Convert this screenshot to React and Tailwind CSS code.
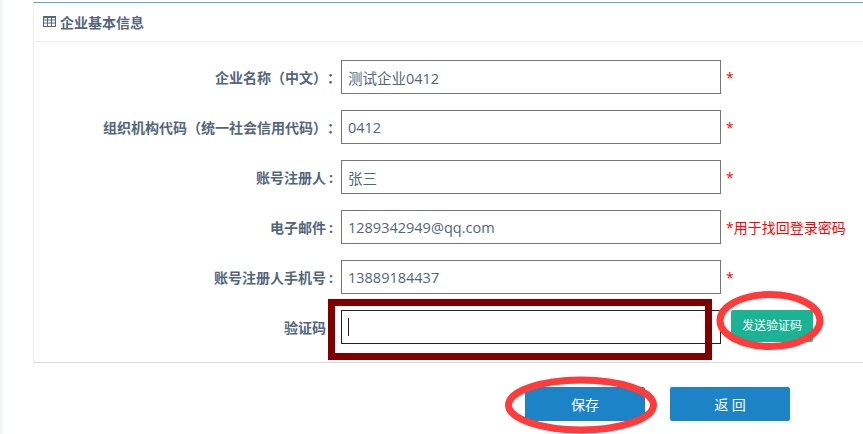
const rows = [
  { label: '企业名称（中文）：', value: '测试企业0412', note: '*' },
  { label: '组织机构代码（统一社会信用代码）：', value: '0412', note: '*' },
  { label: '账号注册人', colon: true, value: '张三', note: '*' },
  { label: '电子邮件', colon: true, value: '1289342949@qq.com', note: '*用于找回登录密码' },
  { label: '账号注册人手机号', colon: true, value: '13889184437', note: '*' },
]

const Row = ({ label, colon, value, note }) => (
  <div className="flex h-[34px] items-center mb-4">
    <label className={`w-[307px] ${colon ? 'pr-[8px]' : 'pr-0'} pt-px text-right text-[14px] font-bold text-[#54667a] whitespace-nowrap [text-spacing-trim:space-all]`}>
      {label}
      {colon && <span className="ml-[3px]">:</span>}
    </label>
    <input
      readOnly
      value={value}
      className="w-[380px] h-[34px] border border-[#767676] bg-white px-[6px] text-[14.5px] text-[#54667a] outline-none"
    />
    <span className="ml-[5px] text-[14px] text-[#ff0000]">{note}</span>
  </div>
)

const App = () => {
  return (
    <div className="relative h-[434px] w-[863px] overflow-hidden bg-white font-['Open_Sans','Noto_Sans_CJK_SC',sans-serif]">
      <div className="flex h-full">
        <div className="w-[3px] shrink-0 bg-[#f4f5f7]" />
        <div className="ml-[30px] flex-1 min-w-0 pt-[2px]">
          {/* Panel */}
          <div className="h-[361px] border-l border-b border-t border-l-[#eeeeee] border-b-[#d9d9d9] border-t-[#5aa9ee]">
            <div className="flex h-[39px] items-center gap-[4px] border-b border-[#eeeeee] pl-[9px] text-[14px] font-bold text-[#54667a]">
              <svg width="13" height="12" viewBox="0 0 13 12" fill="none" stroke="#54667a" strokeWidth="1">
                <rect x="0.5" y="0.5" width="12" height="10" />
                <path d="M0.5 1.5h12M0.5 4h12M0.5 7h12M4.5 0.5v10M8.5 0.5v10" />
              </svg>
              <span>企业基本信息</span>
            </div>
            <div className="pt-[18px]">
              {rows.map((row) => (
                <Row key={row.label} {...row} />
              ))}
              {/* Verification code */}
              <div className="flex h-[34px] items-center">
                <label className="w-[307px] pr-[15px] text-right text-[14px] font-bold text-[#54667a]">验证码</label>
                <div className="flex h-[34px] w-[380px] items-center border border-[#222222] bg-white px-[6px]">
                  <span className="h-[18px] w-px bg-[#222222]" />
                </div>
                <button className="ml-[10px] h-[32px] w-[82px] -translate-y-px rounded-[2px] bg-[#1ab394] text-[12px] text-white">发送验证码</button>
              </div>
            </div>
          </div>
          {/* Actions */}
          <div className="mt-[24px] flex gap-[25px] pl-[492px]">
            <button className="h-[34px] w-[120px] rounded-[2px] bg-[#1c84c6] text-[14px] text-white">保存</button>
            <button className="h-[34px] w-[120px] rounded-[2px] bg-[#1c84c6] text-[14px] text-white">返 回</button>
          </div>
        </div>
      </div>

      {/* Hand-drawn annotations on the screenshot */}
      <div className="absolute left-[328px] top-[299px] h-[61px] w-[384px] border-[7px] border-[#800000]" />
      <svg className="absolute inset-0" width="863" height="434" fill="none" stroke="#ff3b3b" strokeWidth="7">
        <ellipse cx="770" cy="320.5" rx="50" ry="26" />
        <ellipse cx="581" cy="405" rx="72.5" ry="25" />
      </svg>
    </div>
  )
}

export default App
